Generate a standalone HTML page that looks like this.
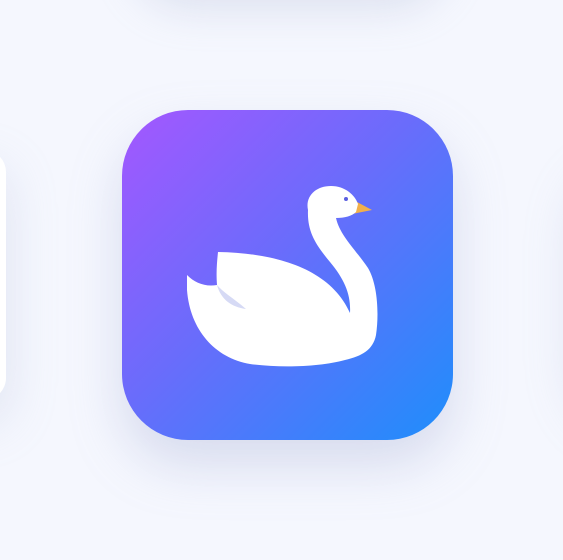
<!DOCTYPE html>
<html><head><meta charset="utf-8"><style>
html,body{margin:0;padding:0;width:563px;height:560px;overflow:hidden;background:#f5f7fe;font-family:"Liberation Sans",sans-serif}
.c{position:absolute;background:#fff;border-radius:60px}
.top{left:130px;top:-330px;width:320px;height:330px;box-shadow:0 10px 40px rgba(170,180,210,.3)}
.left{left:-330px;top:150px;width:336px;height:250px;border-radius:22px;box-shadow:0 20px 50px rgba(170,180,210,.3)}
.right{left:575px;top:150px;width:330px;height:260px;box-shadow:0 20px 50px rgba(170,180,210,.3)}
.icon{position:absolute;left:122px;top:110px;width:331px;height:330px;border-radius:66px;background:linear-gradient(135deg,#a457ff 0%,#6a6cfb 45%,#1e8efb 100%);box-shadow:0 25px 50px rgba(160,170,210,.35)}
svg{position:absolute;left:0;top:0}
</style></head><body>
<div class="c top"></div>
<div class="c left"></div>
<div class="c right"></div>
<div class="icon"></div>
<svg width="563" height="560" viewBox="0 0 563 560">
<path d="M357 202 L372 210 L352 214 Z" fill="#f2b04a"/>
<path d="M308 210 C305 196 316 186 331 186 C345 186 355 195 358 204 L356 212 C352 216 345 218 336 218
 C340 236 356 250 368 268 C378 285 379 315 376 335 C373 350 362 356 345 360 C320 367 280 368 250 364
 C215 358 190 330 187 290 L187 275 C195 283 205 287 217 285 C216 272 217 262 218 252
 C275 253 330 268 350 313 C351 295 345 280 330 262 C316 245 307 232 308 210 Z" fill="#fff"/>
<path d="M217 285 C221 300 232 307 246 309 C236 300 224 293 218 286 Z" fill="#d6daf5"/>
<circle cx="346" cy="199" r="2" fill="#5b5fe0"/>
</svg>
</body></html>
